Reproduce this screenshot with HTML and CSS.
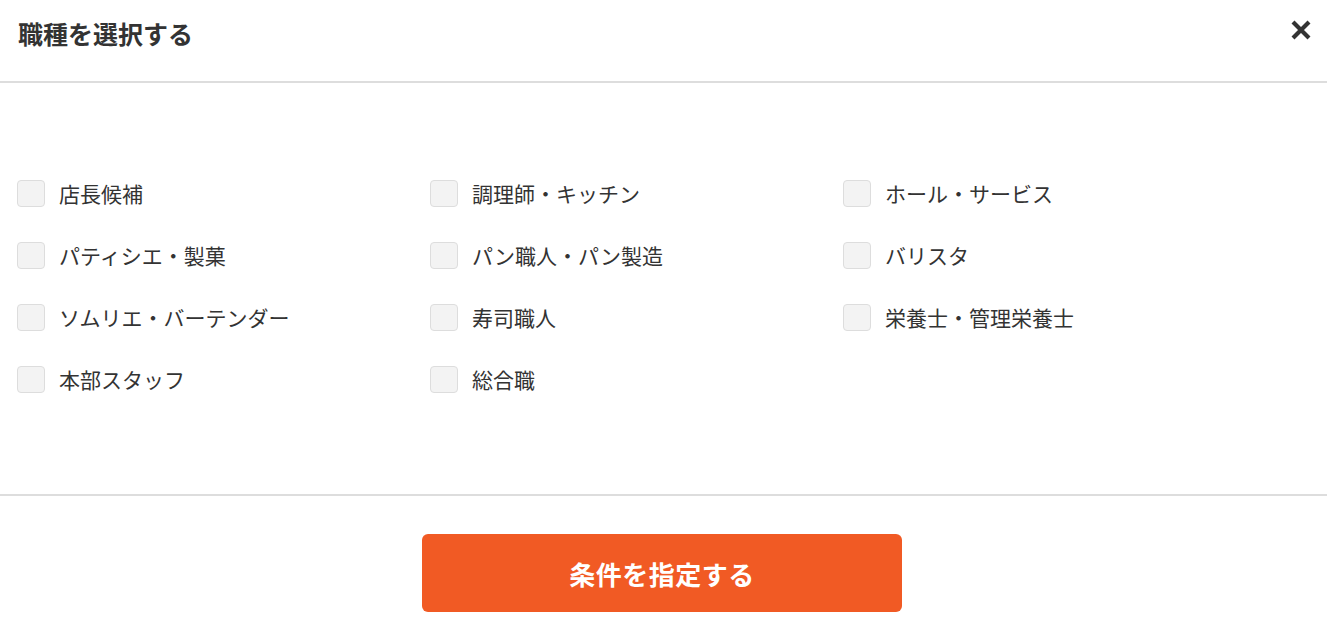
FILE: index.html
```html
<!DOCTYPE html>
<html lang="ja">
<head>
    <meta charset="UTF-8">
    <meta name="viewport" content="width=device-width, initial-scale=1.0">
    <title>職種を選択する</title>
    <link rel="stylesheet" href="styles.css">
</head>
<body>
    <div class="modal">
        <header class="modal-header">
            <h2>職種を選択する</h2>
            <button class="close-btn" type="button" aria-label="閉じる">
                <svg width="22" height="22" viewBox="0 0 22 22">
                    <path d="M3 3L19 19M19 3L3 19" stroke="#333" stroke-width="4.2" stroke-linecap="butt"/>
                </svg>
            </button>
        </header>

        <div class="modal-body">
            <ul class="job-list">
                <li><label><input type="checkbox"><span class="box"></span>店長候補</label></li>
                <li><label><input type="checkbox"><span class="box"></span>調理師・キッチン</label></li>
                <li><label><input type="checkbox"><span class="box"></span>ホール・サービス</label></li>
                <li><label><input type="checkbox"><span class="box"></span>パティシエ・製菓</label></li>
                <li><label><input type="checkbox"><span class="box"></span>パン職人・パン製造</label></li>
                <li><label><input type="checkbox"><span class="box"></span>バリスタ</label></li>
                <li><label><input type="checkbox"><span class="box"></span>ソムリエ・バーテンダー</label></li>
                <li><label><input type="checkbox"><span class="box"></span>寿司職人</label></li>
                <li><label><input type="checkbox"><span class="box"></span>栄養士・管理栄養士</label></li>
                <li><label><input type="checkbox"><span class="box"></span>本部スタッフ</label></li>
                <li><label><input type="checkbox"><span class="box"></span>総合職</label></li>
            </ul>
        </div>

        <footer class="modal-footer">
            <button class="submit-btn" type="button">条件を指定する</button>
        </footer>
    </div>
</body>
</html>
```

FILE: styles.css
```css
:root {
    --text-color: #333333;
    --border-color: #dddddd;
    --accent-color: #f15a24;
    --box-bg: #f3f3f3;
}

* {
    margin: 0;
    padding: 0;
    box-sizing: border-box;
}

body {
    font-family: "Noto Sans CJK JP", "Noto Sans", sans-serif;
    color: var(--text-color);
    background: #ffffff;
}

.modal {
    width: 100%;
}

.modal-header {
    height: 83px;
    display: flex;
    align-items: flex-start;
    justify-content: space-between;
    padding: 0 15px 0 18px;
    border-bottom: 2px solid var(--border-color);
}

.modal-header h2 {
    font-size: 25px;
    font-weight: 700;
    line-height: 1;
    margin-top: 21px;
}

.close-btn {
    background: none;
    border: none;
    cursor: pointer;
    display: flex;
    margin-top: 19px;
}

.modal-body {
    height: 413px;
    padding: 97px 17px 0;
    border-bottom: 2px solid var(--border-color);
}

.job-list {
    list-style: none;
    display: grid;
    grid-template-columns: repeat(3, 413px);
    row-gap: 35px;
}

.job-list label {
    display: flex;
    align-items: center;
    gap: 14px;
    font-size: 21px;
    line-height: 27px;
    cursor: pointer;
}

.job-list input {
    display: none;
}

.box {
    width: 28px;
    height: 27px;
    background: var(--box-bg);
    border: 1px solid var(--border-color);
    border-radius: 4px;
    flex-shrink: 0;
}

.job-list input:checked + .box {
    background: var(--accent-color);
    border-color: var(--accent-color);
}

.modal-footer {
    display: flex;
    justify-content: center;
    padding: 38px 0 0 0;
}

.submit-btn {
    width: 480px;
    height: 78px;
    margin-right: 3px;
    background: var(--accent-color);
    color: #ffffff;
    border: none;
    border-radius: 6px;
    font-family: inherit;
    font-size: 26px;
    font-weight: 700;
    letter-spacing: 0.5px;
    cursor: pointer;
}
```
